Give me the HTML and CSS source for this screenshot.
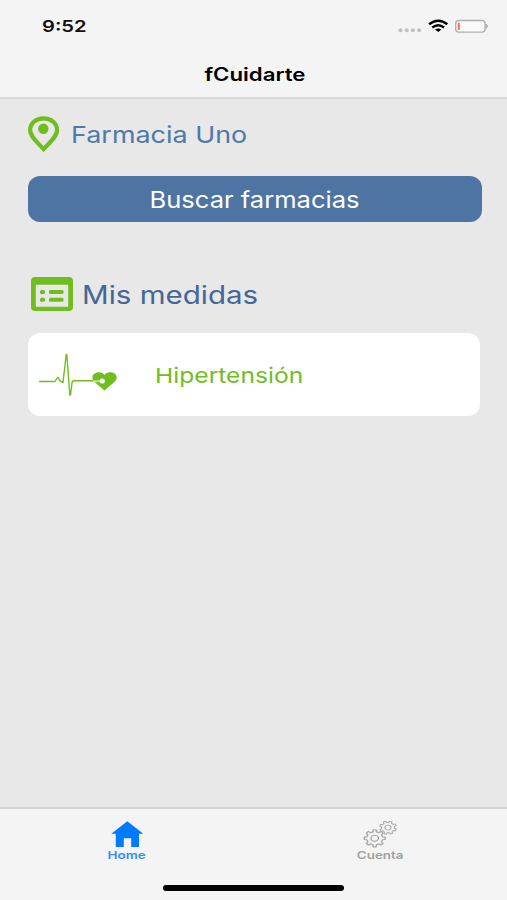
FILE: index.html
```
<!DOCTYPE html>
<html lang="es">

<head>
  <meta charset="UTF-8">
  <title>fCuidarte</title>
  <link rel="stylesheet" href="styles.css">
</head>

<body>
  <div class="app">
    <header class="header">
      <div class="status">
        <span class="text time">9:52</span>
        <svg class="status-icons" width="92" height="16" viewBox="0 0 92 16">
          <g fill="#c0c0c0">
            <circle cx="3.5" cy="12.2" r="2" />
            <circle cx="9.7" cy="12.2" r="2" />
            <circle cx="15.9" cy="12.2" r="2" />
            <circle cx="22.1" cy="12.2" r="2" />
          </g>
          <g fill="none" stroke="#000" stroke-width="2.5">
            <path d="M32.1 6.3Q41.2-.8 50.3 6.3" />
            <path d="M35.3 9.5Q41.2 4.9 47.1 9.5" />
          </g>
          <path d="M38 11.6Q41.2 9.2 44.4 11.6L41.2 14Z" />
          <rect x="58.7" y="2.5" width="29.4" height="11.6" rx="3" fill="#fafafa" stroke="#b0b0b0" stroke-width="1.4" />
          <rect x="60.8" y="4.6" width="2" height="7.4" rx=".8" fill="#ff6b66" />
          <path d="M89.2 6q2.8 2.2 0 4.4z" fill="#aaa" stroke="#aaa" stroke-width=".8" />
        </svg>
      </div>
      <h1 class="title"><span class="text title-text">fCuidarte</span></h1>
    </header>

    <main class="content">
      <div class="row pharmacy">
        <svg class="icon-pin" width="32" height="37" viewBox="0 0 32 37">
          <path d="M15.6 33.2C10 27 2.1 20.5 2.1 14C2.1 7 8.2 2.3 15.6 2.3S29.1 7 29.1 14C29.1 20.5 21.2 27 15.6 33.2Z" fill="none" stroke="#70bd1f" stroke-width="4.2" />
          <circle cx="15.3" cy="12.8" r="5.2" fill="#70bd1f" />
        </svg>
        <span class="text pharmacy-name">Farmacia Uno</span>
      </div>

      <a href="#" class="btn"><span class="text btn-text">Buscar farmacias</span></a>

      <div class="row measures">
        <svg class="icon-list" width="42" height="35" viewBox="0 0 42 35">
          <path fill="#70bd1f" fill-rule="evenodd" d="M4 0H38Q42 0 42 4V30Q42 34 38 34H4Q0 34 0 30V4Q0 0 4 0ZM4.8 7.8V29.8H37.2V7.8Z" />
          <g fill="#70bd1f">
            <rect x="9" y="13" width="5" height="4" rx="1.5" />
            <rect x="18" y="13" width="14.5" height="4" rx="1.2" />
            <rect x="9" y="20.7" width="5" height="4" rx="1.5" />
            <rect x="18" y="20.7" width="14.5" height="4" rx="1.2" />
          </g>
        </svg>
        <span class="text measures-name">Mis medidas</span>
      </div>

      <a href="#" class="card">
        <svg class="icon-pulse" width="80" height="46" viewBox="0 0 80 46">
          <path d="M66.5 38.5L56.3 29.8C51.5 24.5 56.5 19.5 61.5 20.2Q65 20.6 66.5 22.8Q68 20.6 71.5 20.2C77 19.5 81.5 24.5 76.8 29.8Z" fill="#70bd1f" />
          <path d="M54 29.2H64" fill="none" stroke="#c5e4a4" stroke-width="1.8" />
          <path d="M1 29.5H17L19.5 25.5Q20.5 25 21.5 28L23 29.5L25 30.5L28.2 2.5H28.8L31.8 43H32.5L34 31Q34.3 28.8 36 28.8H55" fill="none" stroke="#70bd1f" stroke-width="1.4" stroke-linejoin="round" />
          <circle cx="64.2" cy="29" r="2.6" fill="#fff" />
        </svg>
        <span class="text card-name">Hipertensión</span>
      </a>
    </main>

    <nav class="tabbar">
      <a href="#" class="tab active">
        <svg width="34" height="27" viewBox="0 0 34 27">
          <path d="M17.3 0.3L33.3 12.8H29V26H21.2V17.3H13.8V26H5.8V12.8H1.3Z" fill="#007aff" />
        </svg>
        <span class="text tab-text">Home</span>
      </a>
      <a href="#" class="tab">
        <svg width="34" height="27" viewBox="0 0 34 27">
          <defs>
            <g id="gear">
              <path d="M7.8-1.8L10.4-1.46V1.46L7.8 1.8L6.78 4.24L8.39 6.32L6.32 8.39L4.24 6.78L1.8 7.8L1.46 10.4H-1.46L-1.8 7.8L-4.24 6.78L-6.32 8.39L-8.39 6.32L-6.78 4.24L-7.8 1.8L-10.4 1.46V-1.46L-7.8-1.8L-6.78-4.24L-8.39-6.32L-6.32-8.39L-4.24-6.78L-1.8-7.8L-1.46-10.4H1.46L1.8-7.8L4.24-6.78L6.32-8.39L8.39-6.32L6.78-4.24Z" />
              <circle r="3.7" />
            </g>
          </defs>
          <g fill="none" stroke="#a6a6a6" stroke-width="1.4" stroke-linejoin="round">
            <use href="#gear" transform="translate(11.7 17.3) scale(1 .82)" />
            <use href="#gear" transform="translate(25 6.6) scale(.8 .65) rotate(20)" />
          </g>
        </svg>
        <span class="text tab-text">Cuenta</span>
      </a>
    </nav>
    <div class="home-indicator"></div>
  </div>
</body>

</html>
```

FILE: styles.css
```
* {
  margin: 0;
  padding: 0;
  box-sizing: border-box;
}

body {
  font-family: Inter, "Liberation Sans", sans-serif;
  background: #e8e8e8;
}

a {
  color: inherit;
  text-decoration: none;
}

svg {
  display: block;
  flex: none;
}

/* wide letters */
.text {
  display: inline-block;
  white-space: nowrap;
  transform: scaleX(1.2);
}

.app {
  display: flex;
  flex-direction: column;
  height: 900px;
}

.header {
  height: 99px;
  background: #f4f4f4;
  border-bottom: 2px solid #d9d9d9;
}

.status {
  display: flex;
  justify-content: space-between;
  align-items: center;
  height: 52px;
  padding: 0 18px 0 42px;
}

.time {
  font-size: 16px;
  font-weight: 600;
  color: #111;
  transform: scaleX(1.26);
  transform-origin: left;
}

.title {
  font-size: 18px;
  font-weight: 600;
  line-height: 45px;
  text-align: center;
  color: #000;
  padding-left: 2px;
}

.title-text {
  transform: scaleX(1.235);
}

.content {
  flex: 1;
  padding: 17px 25px 0 28px;
}

.row {
  display: flex;
  align-items: center;
}

.row .text {
  transform-origin: left;
}

.pharmacy {
  height: 37px;
  gap: 11px;
  color: #5078a8;
}

.pharmacy-name {
  font-size: 23.5px;
  transform: scaleX(1.145);
}

.btn {
  display: block;
  height: 46px;
  margin-top: 23px;
  border-radius: 12px;
  background: #4e74a4;
  color: #fff;
  font-size: 22.5px;
  line-height: 48px;
  text-align: center;
}

.btn-text {
  transform: translateX(-1px) scaleX(1.135);
}

.measures {
  height: 36px;
  margin-top: 54px;
  padding-left: 3px;
  gap: 9px;
  color: #446699;
}

.measures-name {
  font-size: 25px;
  line-height: 32px;
  padding-top: 1px;
  transform: scaleX(1.18);
}

.card {
  display: flex;
  align-items: center;
  height: 83px;
  margin: 21px 2px 0 0;
  padding-left: 10px;
  border-radius: 12px;
  background: #fff;
  color: #70bd1f;
}

.card-name {
  margin-left: 37px;
  padding-top: 1px;
  font-size: 20.5px;
  transform-origin: left;
}

.tabbar {
  display: flex;
  height: 78px;
  padding-top: 12px;
  border-top: 2px solid #d4d4d4;
  background: #f4f4f4;
}

.tab {
  flex: 1;
  display: flex;
  flex-direction: column;
  align-items: center;
  font-size: 11px;
  font-weight: 600;
  line-height: 14px;
  color: #a0a0a0;
}

.tab-text {
  transform: scaleX(1.22);
}

.active {
  color: #2f8fff;
}

.home-indicator {
  height: 15px;
  background: #f4f4f4;
}

.home-indicator::before {
  content: "";
  display: block;
  width: 181px;
  height: 6px;
  margin: 0 auto;
  border-radius: 3px;
  background: #000;
}
```
